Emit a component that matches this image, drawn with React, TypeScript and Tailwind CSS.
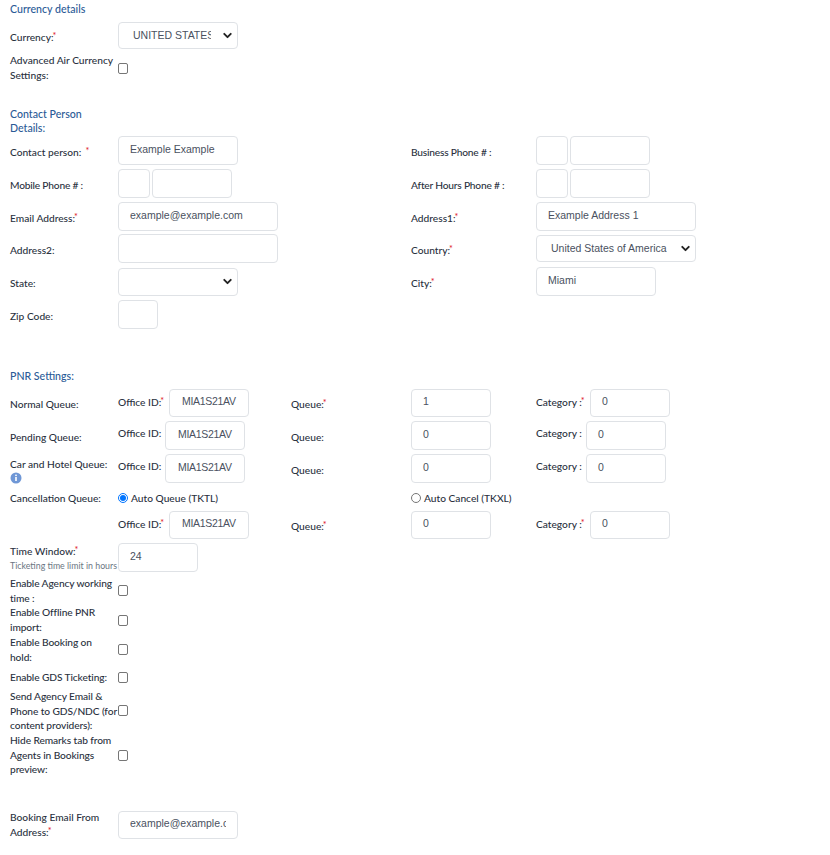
import React from "react";
import { ChevronDown } from "lucide-react";

const Req = () => <sup className="text-[#e0202a] text-[9px] leading-none -ml-px relative -top-0.5">*</sup>;

const Label = ({ children, className = "" }: { children: React.ReactNode; className?: string }) => (
  <div className={`text-[10.2px] whitespace-nowrap text-[#2a3140] font-medium ${className}`}>{children}</div>
);

const Heading = ({ children, className = "" }: { children: React.ReactNode; className?: string }) => (
  <div className={`text-[10.6px] leading-[14px] text-[#2a5a96] font-medium ${className}`}>{children}</div>
);

const Field = ({ value = "", className = "", inner = "" }: { value?: string; className?: string; inner?: string }) => (
  <div
    className={`shrink-0 border border-[#dfe2e6] rounded-[4px] bg-white pl-[11px] pr-1 flex items-center overflow-hidden whitespace-nowrap font-['Liberation_Sans',sans-serif] text-[10.5px] text-[#4a5160] pb-[2px] ${className}`}
  >
    <span className={inner}>{value}</span>
  </div>
);

const Select = ({ value = "", className = "", clip = false }: { value?: string; className?: string; clip?: boolean }) => (
  <div
    className={`shrink-0 border border-[#dfe2e6] rounded-[4px] bg-white pl-[14px] pr-[3px] flex items-center justify-between font-['Liberation_Sans',sans-serif] text-[10.5px] text-[#4a5160] ${className}`}
  >
    <span className={`whitespace-nowrap overflow-hidden ${clip ? "w-[78px]" : ""}`}>{value}</span>
    <ChevronDown size={13} strokeWidth={3.5} className="text-[#222] shrink-0" />
  </div>
);

const Check = () => <div className="w-[10px] h-[11px] shrink-0 rounded-[2px] border border-[#767676] bg-white" />;

const Radio = ({ on = false }: { on?: boolean }) => (
  <div className={`w-[10px] h-[10px] shrink-0 rounded-full border flex items-center justify-center ${on ? "border-[#0075ff]" : "border-[#767676]"}`}>
    {on && <div className="w-[6px] h-[6px] rounded-full bg-[#0075ff]" />}
  </div>
);

const Phone = () => (
  <div className="flex gap-[2px]">
    <Field className="w-8 h-[29px]" />
    <Field className="w-20 h-[29px]" />
  </div>
);

const QueueRow = ({
  name,
  req = false,
  info = false,
  className = "",
  value,
}: {
  name?: string;
  req?: boolean;
  info?: boolean;
  className?: string;
  value: string;
}) => {
  const h = req ? "h-[28px]" : "h-[29px]";
  return (
    <div className={`flex items-center ${h} ${className}`}>
      <Label className={`w-[108px] shrink-0 leading-[15px] ${req ? "mt-[2px]" : "mt-1"}`}>
        {name}
        {info && (
          <svg width="12" height="12" viewBox="0 0 12 12" className="block">
            <circle cx="6" cy="6" r="5.5" fill="#6f97d6" />
            <rect x="5.2" y="5" width="1.6" height="4" fill="#fff" />
            <rect x="5.2" y="2.6" width="1.6" height="1.5" fill="#fff" />
          </svg>
        )}
      </Label>
      <Label className={`shrink-0 leading-[15px] ${req ? "w-[51px] -mt-[2px]" : "w-[47px] -mt-1"}`}>
        Office ID:{req && <Req />}
      </Label>
      <Field value="MIA1S21AV" className={`w-20 ${h}`} inner="ml-px tracking-[-0.3px]" />
      <Label className={`shrink-0 w-[42px] leading-[15px] ${req ? "ml-[42px] mt-[3px]" : "ml-[46px] mt-1"}`}>
        Queue:{req && <Req />}
      </Label>
      <Field value={value} className={`w-20 ml-[78px] ${h}`} />
      <Label className={`shrink-0 ml-[45px] leading-[15px] ${req ? "w-[54px] -mt-[2px]" : "w-[50px] -mt-1"}`}>
        Category :{req && <Req />}
      </Label>
      <Field value="0" className={`w-20 ${h}`} />
    </div>
  );
};

const CheckRow = ({ lines, className = "" }: { lines: string[]; className?: string }) => (
  <div className={`flex items-center ${className}`}>
    <Label className="w-[108px] shrink-0 leading-[14.7px] tracking-[-0.1px]">
      {lines.map((l) => (
        <div key={l}>{l}</div>
      ))}
    </Label>
    <Check />
  </div>
);

const TwoCol = ({ left, right, className = "" }: { left: React.ReactNode; right?: React.ReactNode; className?: string }) => (
  <div className={`flex ${className}`}>
    <div className="w-[401px] shrink-0 flex items-center">{left}</div>
    <div className="flex items-center">{right}</div>
  </div>
);

const rowLabel = "w-[108px] shrink-0 leading-[15px] mt-1";
const rightLabel = "w-[125px] shrink-0 leading-[15px] mt-1";

const App = () => {
  return (
    <div className="w-[830px] h-[855px] overflow-hidden bg-white pl-[10px] pt-[2px] font-['Lato',sans-serif]">
      <Heading>Currency details</Heading>

      <div className="flex items-center mt-[6px]">
        <Label className={rowLabel}>
          Currency:
          <Req />
        </Label>
        <Select value="UNITED STATES DOLLAR" clip className="w-[120px] h-[27px]" />
      </div>

      <div className="flex items-center mt-1">
        <Label className="w-[108px] shrink-0 leading-[15px]">
          <div>Advanced Air Currency</div>
          <div>Settings:</div>
        </Label>
        <Check />
      </div>

      <Heading className="mt-[24px]">
        <div>Contact Person</div>
        <div>Details:</div>
      </Heading>

      <TwoCol
        className="mt-[1px]"
        left={
          <>
            <Label className={rowLabel}>
              Contact person: &nbsp;
              <Req />
            </Label>
            <Field value="Example Example" className="w-[120px] h-[29px]" />
          </>
        }
        right={
          <>
            <Label className={`${rightLabel} tracking-[-0.2px]`}>Business Phone # :</Label>
            <Phone />
          </>
        }
      />
      <TwoCol
        className="mt-1"
        left={
          <>
            <Label className={`${rowLabel} tracking-[-0.2px]`}>Mobile Phone # :</Label>
            <Phone />
          </>
        }
        right={
          <>
            <Label className={`${rightLabel} tracking-[-0.2px]`}>After Hours Phone # :</Label>
            <Phone />
          </>
        }
      />
      <TwoCol
        className="mt-1"
        left={
          <>
            <Label className={rowLabel}>
              Email Address:
              <Req />
            </Label>
            <Field value="example@example.com" className="w-40 h-[29px]" />
          </>
        }
        right={
          <>
            <Label className={rightLabel}>
              Address1:
              <Req />
            </Label>
            <Field value="Example Address 1" className="w-40 h-[29px]" />
          </>
        }
      />
      <TwoCol
        className="mt-[3px]"
        left={
          <>
            <Label className={rowLabel}>Address2:</Label>
            <Field className="w-40 h-[29px]" />
          </>
        }
        right={
          <>
            <Label className={rightLabel}>
              Country:
              <Req />
            </Label>
            <Select value="United States of America" className="w-40 h-[27px]" />
          </>
        }
      />
      <TwoCol
        className="mt-1"
        left={
          <>
            <Label className={rowLabel}>State:</Label>
            <Select className="w-[120px] h-[28px]" />
          </>
        }
        right={
          <>
            <Label className={rightLabel}>
              City:
              <Req />
            </Label>
            <Field value="Miami" className="w-[120px] h-[29px]" />
          </>
        }
      />
      <div className="flex items-center mt-1">
        <Label className={rowLabel}>Zip Code:</Label>
        <Field className="w-10 h-[29px]" />
      </div>

      <Heading className="mt-[40px]">PNR Settings:</Heading>

      <QueueRow className="mt-[6px]" name="Normal Queue:" req value="1" />
      <QueueRow className="mt-1" name="Pending Queue:" value="0" />
      <QueueRow className="mt-1" name="Car and Hotel Queue:" info value="0" />

      <div className="flex items-center mt-[7px] h-[15px]">
        <Label className="w-[108px] shrink-0 leading-[15px] mt-[2px]">Cancellation Queue:</Label>
        <Radio on />
        <Label className="ml-[3px] w-[280px] shrink-0 leading-[15px] mt-[2px]">Auto Queue (TKTL)</Label>
        <Radio />
        <Label className="ml-[3px] leading-[15px] mt-[2px]">Auto Cancel (TKXL)</Label>
      </div>

      <QueueRow className="mt-[6px]" req value="0" />

      <div className="flex items-center mt-1">
        <div className="w-[108px] shrink-0">
          <Label className="leading-[15px]">
            Time Window:
            <Req />
          </Label>
          <div className="text-[8.8px] leading-[13px] text-[#6b7683] whitespace-nowrap">Ticketing time limit in hours</div>
        </div>
        <Field value="24" className="w-20 h-[29px]" />
      </div>

      <CheckRow className="mt-1" lines={["Enable Agency working", "time :"]} />
      <CheckRow lines={["Enable Offline PNR", "import:"]} />
      <CheckRow lines={["Enable Booking on", "hold:"]} />
      <CheckRow className="mt-[6px]" lines={["Enable GDS Ticketing:"]} />
      <CheckRow className="mt-1" lines={["Send Agency Email &", "Phone to GDS/NDC (for", "content providers):"]} />
      <CheckRow lines={["Hide Remarks tab from", "Agents in Bookings", "preview:"]} />

      <div className="flex items-center mt-[33px]">
        <Label className="w-[108px] shrink-0 leading-[15px]">
          <div>Booking Email From</div>
          <div>
            Address:
            <Req />
          </div>
        </Label>
        <Field value="example@example.com" className="w-[120px] h-[28px]" inner="block w-[96px] overflow-hidden" />
      </div>
    </div>
  );
};

export default App;
